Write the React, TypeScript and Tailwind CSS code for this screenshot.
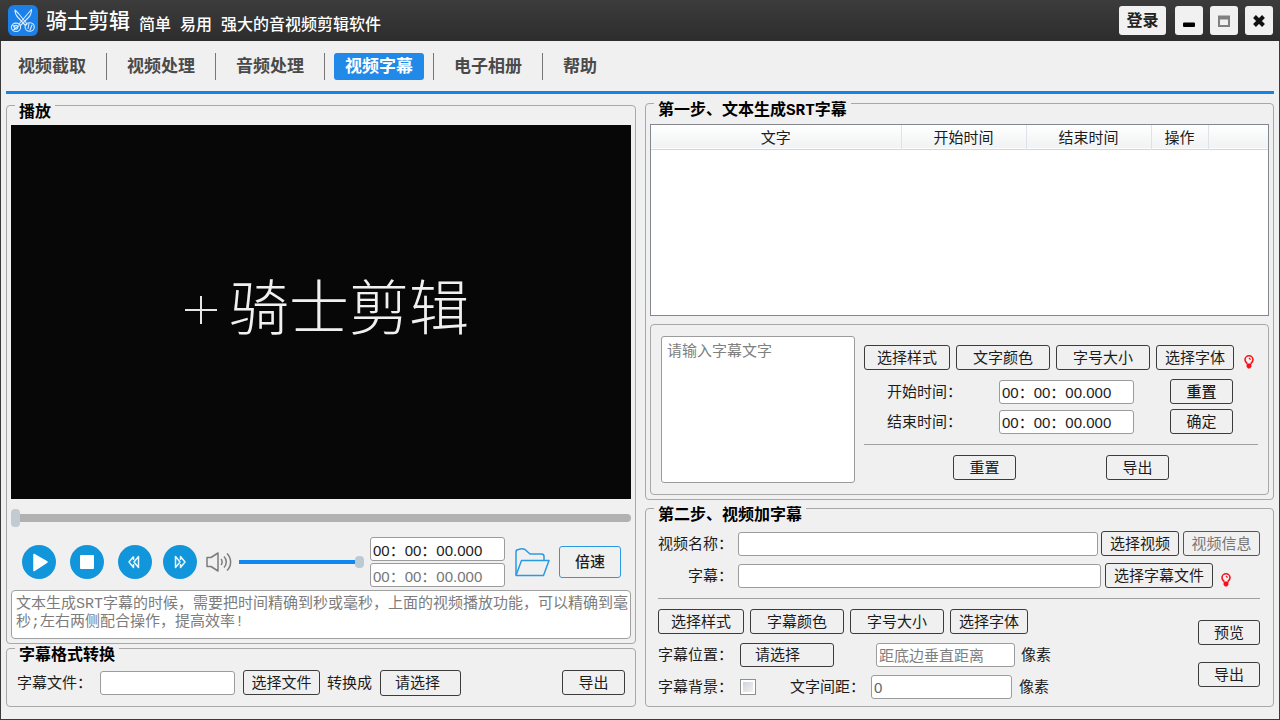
import type { InputHTMLAttributes, ButtonHTMLAttributes, ReactNode } from "react";

const tabs = ["视频截取", "视频处理", "音频处理", "视频字幕", "电子相册", "帮助"];
const columns = [
  { name: "文字", style: "w-[250px]" },
  { name: "开始时间", style: "w-[125px]" },
  { name: "结束时间", style: "w-[125px]" },
  { name: "操作", style: "w-[57px] font-medium" },
];

function Group({ title, className = "", bodyClass = "", children }: { title: string; className?: string; bodyClass?: string; children: ReactNode }) {
  return (
    <fieldset className={`flex min-w-0 flex-col rounded border border-[#a8a8a8] ${className}`}>
      <legend className="ml-2 h-4 px-1 font-['Liberation_Mono','Noto_Sans_CJK_SC',monospace] text-base/8 font-bold text-black">{title}</legend>
      <div className={`flex flex-1 flex-col ${bodyClass}`}>{children}</div>
    </fieldset>
  );
}

function Button({ className = "", ...rest }: ButtonHTMLAttributes<HTMLButtonElement>) {
  return (
    <button
      type="button"
      className={`h-[25px] shrink-0 whitespace-nowrap rounded-[3px] border border-[#3c3c3c] text-center text-[15px]/5 disabled:border-[#555] disabled:text-[#777] ${className}`}
      {...rest}
    />
  );
}

function TextInput({ className = "", ...rest }: InputHTMLAttributes<HTMLInputElement>) {
  return (
    <input
      type="text"
      className={`h-6 min-w-0 rounded-[3px] border border-[#9c9c9c] bg-white px-0.5 text-[15px]/5 placeholder:text-[#808080] ${className}`}
      {...rest}
    />
  );
}

function Choice({ className = "", label, id }: { className?: string; label?: string; id: string }) {
  return (
    <select
      id={id}
      aria-label={label}
      className={`appearance-none rounded-[3px] border border-[#3c3c3c] pl-[14px] text-[15px]/5 ${className}`}
    >
      <option>请选择</option>
    </select>
  );
}

function Bulb({ className = "" }: { className?: string }) {
  return (
    <svg viewBox="0 0 10 14" className={`h-[14px] w-[10px] shrink-0 ${className}`} fill="none" stroke="#f81018">
      <path d="M3.200 8.500C1.800 7.500 1 6.200 1 4.800A4 4 0 0 1 9 4.800C9 6.200 8.200 7.500 6.800 8.500" strokeWidth="1.600" />
      <path d="M5 3L6.600 4.600" strokeWidth="1.200" />
      <path d="M2.600 8.500H7.400V11.800L6 13.600H4L2.600 11.800Z" fill="#f81018" stroke="none" />
    </svg>
  );
}

function RoundButton({ label, className = "", children }: { label: string; className?: string; children: ReactNode }) {
  return (
    <button
      type="button"
      aria-label={label}
      className={`flex size-[34px] shrink-0 items-center justify-center rounded-full bg-[#1296db] ${className}`}
    >
      {children}
    </button>
  );
}

function Logo() {
  return (
    <svg viewBox="0 0 30 31" className="h-[31px] w-[30px] shrink-0" fill="none" stroke="#d8eaff" strokeWidth="1.100" strokeLinecap="round" strokeLinejoin="round">
      <rect width="30" height="31" rx="6" fill="#1b80e8" stroke="none" />
      <path d="M7 5C7 8 8 10.500 10 12.500L17.500 20.500L19 19L10.500 8.500Z" />
      <path d="M23.500 4.500C23.500 7.500 22.500 10.500 20.500 12.500L12.500 20.500L11 19L20 8.500Z" />
      <ellipse cx="8" cy="22.300" rx="4.600" ry="4.200" />
      <ellipse cx="21.700" cy="22" rx="4.600" ry="4.300" />
      <circle cx="8" cy="22.300" r="1.900" />
      <path d="M5 20.500L7 22M5.500 25L10.500 21M21 18.500L20 23.500M24 20L22 25" />
    </svg>
  );
}

function TitleBar() {
  const box = "flex h-[29px] w-[28px] items-center justify-center rounded-[3px] bg-[#f1f1f1]";
  return (
    <header className="flex h-[41px] items-center bg-linear-to-b from-[#3c3c3c] to-[#2d2d2d] pr-[7px] pl-2 text-white">
      <Logo />
      <h1 className="ml-2 text-[21px]/8 font-medium">骑士剪辑</h1>
      <p className="mt-2 ml-[9px] flex gap-[9px] text-base/5 font-medium">
        <span>简单</span>
        <span>易用</span>
        <span>强大的音视频剪辑软件</span>
      </p>
      <div className="ml-auto flex gap-[7px]">
        <button type="button" className="mr-0.5 h-[29px] w-[47px] rounded-[3px] bg-[#f1f1f1] text-base/6 font-bold text-[#222]">
          登录
        </button>
        <button type="button" aria-label="最小化" className={box}>
          <svg viewBox="0 0 14 14" className="size-[14px]">
            <rect x="1" y="8.500" width="12" height="4.500" rx="1" fill="#000" />
          </svg>
        </button>
        <button type="button" aria-label="最大化" className={box}>
          <svg viewBox="0 0 14 14" className="size-[14px]">
            <path d="M1 1.500H13V13H1ZM3 5.500V11H11V5.500Z" fill="#808080" fillRule="evenodd" />
          </svg>
        </button>
        <button type="button" aria-label="关闭" className={box}>
          <svg viewBox="0 0 14 14" className="size-[14px]">
            <path d="M2.500 2.500L11.500 11.500M11.500 2.500L2.500 11.500" stroke="#111" strokeWidth="4" />
          </svg>
        </button>
      </div>
    </header>
  );
}

function TabBar() {
  return (
    <nav className="mx-[5px] flex h-[53px] items-start border-b-[3px] border-[#1584e6] pt-3 pl-px">
      {tabs.map((name, i) => (
        <div key={name} className="flex items-center">
          {i > 0 && <span className="mx-[9px] h-[27px] w-px bg-[#777]" />}
          <button
            type="button"
            className={
              name === "视频字幕"
                ? "h-[27px] rounded-[3px] bg-[#2189e8] px-[11px] text-[17px]/6 font-bold text-white"
                : "h-[27px] rounded-[3px] px-[11px] text-[17px]/6 font-bold text-[#4a4a4a]"
            }
          >
            {name}
          </button>
        </div>
      ))}
    </nav>
  );
}

function Player() {
  return (
    <Group title="播放" className="flex-1" bodyClass="px-1 pt-3 pb-1">
      <div className="flex min-h-[240px] flex-1 items-center justify-center bg-[#070707] pb-1 pl-3 text-[#f0f0f0]">
        <svg viewBox="0 0 32 32" className="mr-3 size-8" stroke="#e6e6e6" strokeWidth="2">
          <path d="M0 16H32M16 2V30" />
        </svg>
        <span className="text-[60px]/[64px] font-light">骑士剪辑</span>
      </div>
      <input
        type="range"
        aria-label="播放进度"
        defaultValue={0}
        className="mt-[10px] h-[18px] w-full appearance-none bg-transparent [&::-webkit-slider-runnable-track]:h-2 [&::-webkit-slider-runnable-track]:rounded-full [&::-webkit-slider-runnable-track]:bg-[#b1b1b1] [&::-webkit-slider-thumb]:-mt-[5px] [&::-webkit-slider-thumb]:h-[18px] [&::-webkit-slider-thumb]:w-[9px] [&::-webkit-slider-thumb]:appearance-none [&::-webkit-slider-thumb]:rounded-[4px] [&::-webkit-slider-thumb]:bg-[#c0ccd1]"
      />
      <div className="mt-[11px] flex h-12 items-center pr-[10px] pl-[11px]">
        <RoundButton label="播放">
          <svg viewBox="0 0 34 34" className="size-[34px]">
            <path d="M12 9.500L25 17L12 25.500Z" fill="#fff" stroke="#fff" strokeWidth="1.500" strokeLinejoin="round" />
          </svg>
        </RoundButton>
        <RoundButton label="停止" className="ml-[14px]">
          <svg viewBox="0 0 34 34" className="size-[34px]">
            <rect x="10" y="10" width="14" height="14" rx="1" fill="#fff" />
          </svg>
        </RoundButton>
        <RoundButton label="快退" className="ml-[14px]">
          <svg viewBox="0 0 34 34" className="size-[34px]" fill="none" stroke="#e8f6ff" strokeWidth="1.500" strokeLinejoin="round">
            <path d="M15.500 11.500L11 17L15.500 22.500V19M15.500 11.500V15M20.500 11.500L16 17L20.500 22.500Z" />
          </svg>
        </RoundButton>
        <RoundButton label="快进" className="ml-[11px]">
          <svg viewBox="0 0 34 34" className="size-[34px]" fill="none" stroke="#e8f6ff" strokeWidth="1.500" strokeLinejoin="round">
            <path d="M12.500 11.500L17 17L12.500 22.500ZM17.500 15V11.500L22 17L17.500 22.500V19" />
          </svg>
        </RoundButton>
        <svg viewBox="0 0 26 22" className="ml-[9px] h-[22px] w-[26px] shrink-0" fill="none" stroke="#7c7c7c" strokeWidth="1.500" strokeLinejoin="round">
          <path d="M1 6.500H5L12 2V20L5 15.500H1Z" />
          <path d="M15 8C16.500 9.500 16.500 12.500 15 14M18 5.500C21 8.500 21 13.500 18 16.500M21 2.500C25.800 7.500 25.800 15 21 19.500" />
        </svg>
        <input
          type="range"
          aria-label="音量"
          defaultValue={100}
          className="ml-[7px] h-3 min-w-0 flex-1 appearance-none bg-transparent [&::-webkit-slider-runnable-track]:h-1 [&::-webkit-slider-runnable-track]:bg-[#1188f0] [&::-webkit-slider-thumb]:-mt-1 [&::-webkit-slider-thumb]:h-3 [&::-webkit-slider-thumb]:w-[9px] [&::-webkit-slider-thumb]:appearance-none [&::-webkit-slider-thumb]:rounded-[4px] [&::-webkit-slider-thumb]:bg-[#bccbd2]"
        />
        <div className="ml-[6px] flex flex-col gap-0.5">
          <TextInput aria-label="当前时间" defaultValue="00：00：00.000" className="w-[135px]" />
          <TextInput aria-label="总时间" defaultValue="00：00：00.000" className="w-[135px] text-[#777]" />
        </div>
        <button type="button" aria-label="打开文件" className="ml-[9px] shrink-0">
          <svg viewBox="0 0 36 30" className="h-[30px] w-9" fill="none" stroke="#2a9be2" strokeWidth="1.500" strokeLinejoin="round">
            <path d="M2 28V5Q2 2.500 4.500 2.500Q8 1 11 2.500L16 7H27.500Q30 7 30 9.500V13" />
            <path d="M2 28.500L7.500 13.500H35L29.500 28.500Z" />
          </svg>
        </button>
        <button type="button" className="ml-[9px] h-8 w-[62px] shrink-0 rounded-[3px] border border-[#2a9be2] text-[15px]/5 font-medium">
          倍速
        </button>
      </div>
      <textarea
        readOnly
        aria-label="使用说明"
        className="mt-1 h-[49px] w-full resize-none overflow-hidden rounded border border-[#a0a0a0] bg-white pt-[5px] pl-1 font-['Liberation_Mono','Noto_Sans_CJK_SC',monospace] text-[15px]/[18px] text-[#7c7c7c]"
        value="文本生成SRT字幕的时候，需要把时间精确到秒或毫秒，上面的视频播放功能，可以精确到毫秒;左右两侧配合操作，提高效率!"
      />
    </Group>
  );
}

function Converter() {
  return (
    <Group title="字幕格式转换" className="-mt-1" bodyClass="px-[10px] pt-[14px] pb-[11px]">
      <div className="flex h-[25px] items-center">
        <label htmlFor="subtitle-source" className="w-[83px]">字幕文件：</label>
        <TextInput id="subtitle-source" className="w-[135px]" />
        <Button className="ml-2 w-[77px]">选择文件</Button>
        <label htmlFor="target-format" className="ml-[7px]">转换成</label>
        <Choice id="target-format" className="ml-2 h-[26px] w-[81px]" />
        <Button className="ml-auto w-[63px]">导出</Button>
      </div>
    </Group>
  );
}

function StepOne() {
  return (
    <Group title="第一步、文本生成SRT字幕" className="flex-1" bodyClass="px-1 pt-[13px] pb-1">
      <div className="min-h-[100px] flex-1 border border-[#828790] bg-white">
        <table className="w-full table-fixed border-collapse">
          <thead>
            <tr className="h-6 border-b border-[#d5d5d5] bg-linear-to-b from-white to-[#f1f2f4]">
              {columns.map((c) => (
                <th key={c.name} scope="col" className={`border-r border-[#dfe2e6] p-0 pt-0.5 text-center text-[15px]/5 font-normal ${c.style}`}>
                  {c.name}
                </th>
              ))}
              <td />
            </tr>
          </thead>
        </table>
      </div>
      <div className="mt-2 flex rounded border border-[#a8a8a8] px-[10px] py-[11px]">
        <textarea
          aria-label="字幕文字"
          placeholder="请输入字幕文字"
          className="h-[147px] w-[194px] shrink-0 resize-none rounded-[3px] border border-[#9c9c9c] bg-white px-[5px] pt-1 text-[15px]/5 placeholder:text-[#808080]"
        />
        <div className="ml-[9px] min-w-0 flex-1 pt-[9px]">
          <div className="flex items-center gap-[6px]">
            <Button className="w-[86px]">选择样式</Button>
            <Button className="w-[94px]">文字颜色</Button>
            <Button className="w-[94px]">字号大小</Button>
            <Button className="w-[78px]">选择字体</Button>
            <Bulb className="mt-2 ml-1" />
          </div>
          <div className="mt-[9px] flex items-center pl-[23px]">
            <label htmlFor="start-time" className="w-[112px]">开始时间：</label>
            <TextInput id="start-time" defaultValue="00：00：00.000" className="w-[135px]" />
            <Button className="ml-9 w-[63px] font-medium">重置</Button>
          </div>
          <div className="mt-[5px] flex items-center pl-[23px]">
            <label htmlFor="end-time" className="w-[112px]">结束时间：</label>
            <TextInput id="end-time" defaultValue="00：00：00.000" className="w-[135px]" />
            <Button className="ml-9 w-[63px]">确定</Button>
          </div>
          <hr className="mt-[10px] border-[#a0a0a0]" />
          <div className="mt-[10px] flex gap-[90px] pl-[89px]">
            <Button className="w-[63px]">重置</Button>
            <Button className="w-[63px]">导出</Button>
          </div>
        </div>
      </div>
    </Group>
  );
}

function StepTwo() {
  return (
    <Group title="第二步、视频加字幕" bodyClass="pt-[15px] pr-[13px] pb-[7px] pl-3">
      <div className="flex items-center">
        <label htmlFor="video-name" className="w-20 shrink-0">视频名称：</label>
        <TextInput id="video-name" className="flex-1" />
        <Button className="ml-[3px] w-[78px]">选择视频</Button>
        <Button className="ml-1 w-[77px]" disabled>视频信息</Button>
      </div>
      <div className="mt-[7px] flex items-center">
        <label htmlFor="subtitle-file" className="w-20 shrink-0 pl-[30px]">字幕：</label>
        <TextInput id="subtitle-file" className="flex-1" />
        <Button className="ml-1 w-[108px]">选择字幕文件</Button>
        <Bulb className="mt-2 mr-[29px] ml-2" />
      </div>
      <hr className="mt-[10px] border-[#a0a0a0]" />
      <div className="mt-[10px] flex justify-between">
        <div>
          <div className="flex gap-[6px]">
            <Button className="w-[86px]">选择样式</Button>
            <Button className="w-[94px]">字幕颜色</Button>
            <Button className="w-[94px]">字号大小</Button>
            <Button className="w-[78px]">选择字体</Button>
          </div>
          <div className="mt-[9px] flex items-center">
            <label htmlFor="position" className="w-[82px]">字幕位置：</label>
            <Choice id="position" className="h-6 w-[94px]" />
            <TextInput aria-label="距底边垂直距离" placeholder="距底边垂直距离" className="ml-[42px] w-[139px]" />
            <span className="ml-[6px]">像素</span>
          </div>
          <div className="mt-2 flex items-center">
            <label htmlFor="background" className="w-[82px]">字幕背景：</label>
            <input
              id="background"
              type="checkbox"
              className="size-4 appearance-none border border-[#8f8f8f] bg-linear-to-br from-[#c9ced6] to-[#f6f6f6] ring-2 ring-white ring-inset"
            />
            <label htmlFor="spacing" className="ml-[34px] w-[81px]">文字间距：</label>
            <TextInput id="spacing" defaultValue="0" className="w-[141px] text-[#666]" />
            <span className="ml-[7px]">像素</span>
          </div>
        </div>
        <div className="flex flex-col gap-[17px] pt-[11px]">
          <Button className="w-[62px]">预览</Button>
          <Button className="w-[62px]">导出</Button>
        </div>
      </div>
    </Group>
  );
}

export default function App() {
  return (
    <div className="flex min-h-screen flex-col bg-[#2d2d2d] font-['Liberation_Sans','Noto_Sans_CJK_SC',sans-serif] text-[15px]/5 text-[#1c1c1c]">
      <TitleBar />
      <div className="flex flex-1 flex-col border-x border-b border-[#3a3a3a] bg-[#f0f0f0]">
        <TabBar />
        <main className="grid flex-1 grid-cols-[630fr_629fr] gap-[9px] px-[5px] pb-3">
          <div className="flex min-w-0 flex-col pt-[3px]">
            <Player />
            <Converter />
          </div>
          <div className="flex min-w-0 flex-col pt-px">
            <StepOne />
            <StepTwo />
          </div>
        </main>
      </div>
    </div>
  );
}
